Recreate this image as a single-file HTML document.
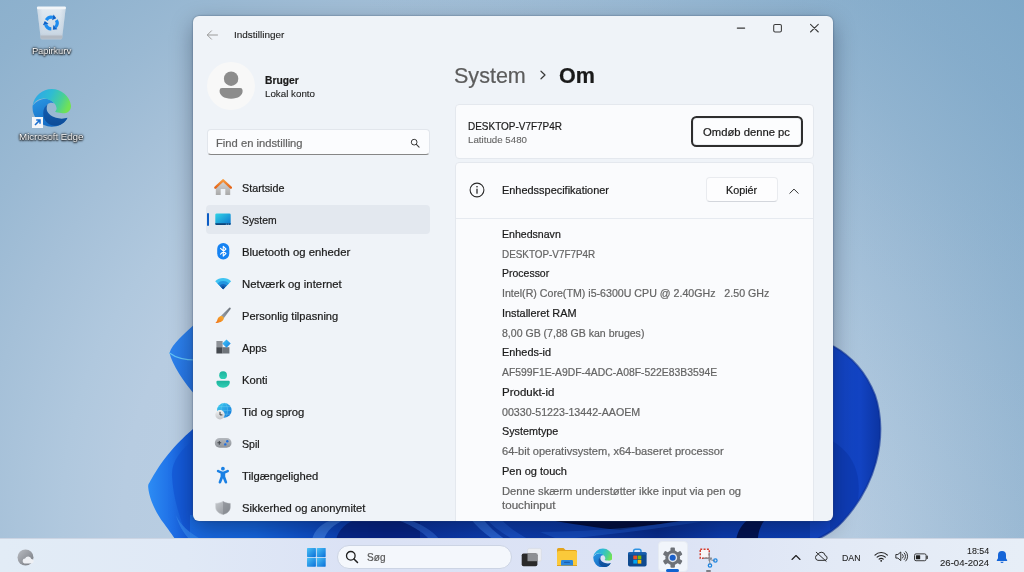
<!DOCTYPE html>
<html lang="da">
<head>
<meta charset="utf-8">
<title>Indstillinger</title>
<style>
*{box-sizing:border-box;margin:0;padding:0}
html,body{width:1024px;height:572px;overflow:hidden}
body{position:relative;font-family:"Liberation Sans","DejaVu Sans",sans-serif;color:#1b1b1b;
background:#9dbcd4}
#wall{position:absolute;left:0;top:0;width:1024px;height:572px}
.abs{position:absolute}
.t{position:absolute;-webkit-text-stroke:.22px currentColor;white-space:nowrap;line-height:0;height:0;transform-origin:0 50%}
/* desktop icons */
.dlabel{will-change:transform;color:#fff;-webkit-text-stroke:0;
text-shadow:0 0 2px #000,0 1px 2px #000,0 0 3px rgba(0,0,0,.8)}
/* window */
#win{will-change:transform;position:absolute;left:193px;top:16px;width:640px;height:505px;background:#eff3f8;
border-radius:6px;overflow:hidden;box-shadow:0 0 0 .5px rgba(70,95,125,.3),0 8px 22px rgba(0,10,30,.36),0 0 3px rgba(0,10,30,.2)}
#win{color:#1b1b1b}
.nav{font-size:11.2px}
.card{position:absolute;background:#fafbfd;border:1px solid #e4e8ee;border-radius:4px}
.lab{font-size:11.2px;color:#1b1b1b}
.val{font-size:11.2px;color:#6a6a6a}
/* taskbar */
#tb{will-change:transform;position:absolute;left:0;top:538px;width:1024px;height:34px;background:linear-gradient(90deg,#e2ecf6 0%,#e0e9f6 18%,#dbe2f5 34%,#dce3f5 66%,#e3eaf6 82%,#e7eef7 100%);box-shadow:inset 0 1px 0 #cdd5e3}
</style>
</head>
<body>
<svg id="wall" viewBox="0 0 1024 572">
<defs>
<radialGradient id="bg" cx="480" cy="520" r="760" gradientUnits="userSpaceOnUse">
<stop offset="0" stop-color="#c0d3e6"/><stop offset=".47" stop-color="#b7cce1"/><stop offset=".55" stop-color="#b0c8de"/><stop offset=".66" stop-color="#a5c0d8"/><stop offset=".76" stop-color="#9ab9d3"/><stop offset=".88" stop-color="#8fb2ce"/><stop offset="1" stop-color="#88aecb"/>
</radialGradient>
<linearGradient id="bg2" x1="1024" y1="0" x2="660" y2="330" gradientUnits="userSpaceOnUse"><stop offset="0" stop-color="#6a9cc2" stop-opacity=".32"/><stop offset="1" stop-color="#6a9cc2" stop-opacity="0"/></linearGradient>
<linearGradient id="pL1" x1="0" y1="0" x2="1" y2="1"><stop offset="0" stop-color="#2f86ee"/><stop offset="1" stop-color="#2470e0"/></linearGradient>
<linearGradient id="pL2" x1="0" y1="0" x2="1" y2="0"><stop offset="0" stop-color="#2c8cf4"/><stop offset=".5" stop-color="#1f6fe6"/><stop offset="1" stop-color="#0f4fd0"/></linearGradient>
<linearGradient id="pR" x1="810" y1="0" x2="882" y2="0" gradientUnits="userSpaceOnUse"><stop offset="0" stop-color="#1448c8"/><stop offset=".7" stop-color="#1243c2"/><stop offset="1" stop-color="#0b339f"/></linearGradient>
<linearGradient id="pB" x1="190" y1="0" x2="840" y2="0" gradientUnits="userSpaceOnUse"><stop offset="0" stop-color="#1a6ce4"/><stop offset=".1" stop-color="#1565de"/><stop offset=".2" stop-color="#0e4cc6"/><stop offset=".3" stop-color="#0a2f9c"/><stop offset=".45" stop-color="#0d3cae"/><stop offset=".6" stop-color="#0c3aa8"/><stop offset=".72" stop-color="#092c8c"/><stop offset=".82" stop-color="#0c3cb0"/><stop offset="1" stop-color="#0d3fb6"/></linearGradient>
</defs>
<rect width="1024" height="572" fill="url(#bg)"/>
<rect width="1024" height="572" fill="url(#bg2)"/>
<!-- bloom: bottom band -->
<path d="M196.0 427.0C195.5 427.3 195.6 426.8 193.0 429.0C190.4 431.2 184.8 436.3 180.6 440.5C176.4 444.7 171.8 449.8 168.0 454.4C164.2 459.0 160.8 464.0 157.8 468.4C154.9 472.8 151.9 477.9 150.3 481.0C148.7 484.1 148.0 483.9 148.2 487.3C148.4 490.7 149.7 496.4 151.5 501.3C153.3 506.2 156.3 511.9 159.1 516.5C161.8 521.1 165.5 525.4 168.0 529.0C170.5 532.6 173.0 536.0 174.3 538.0C175.6 540.0 175.7 540.5 176.0 541.0L196 541Z" fill="url(#pL2)"/>
<path d="M196 438 C181 449 171 462 172 476 C173 498 180 520 189 540 L196 540Z" fill="#1256d4" opacity=".7"/>
<path d="M196 323 C184 334 172 344 169.500 353 C172 364 184 383 196 396Z" fill="url(#pL1)"/>
<path d="M169.500 353 C176 358 186 360 196 360" fill="none" stroke="#63c4f6" stroke-width="1.200"/>
<rect x="190" y="515" width="626" height="26" fill="url(#pB)"/>
<path d="M176 515 C180 525 190 533 202 540 L190 540 C184 534 178 524 176 515Z" fill="#3b8ff0" opacity=".6"/>
<path d="M312 540 C314 530 322 523 334 519 L346 519 C334 524 326 531 324 540Z" fill="#3f7fe6" opacity=".75"/>
<path d="M336 540 C338 530 346 522 360 518 L420 518 L420 540Z" fill="#06207e" opacity=".8"/>
<path d="M392 518 C410 524 422 531 430 540 L440 540 C432 530 420 523 404 518Z" fill="#2b63d2" opacity=".7"/>
<path d="M470 518 L482 518 C488 526 496 533 506 540 L494 540 C484 533 476 526 470 518Z" fill="#2f6bdc" opacity=".8"/>
<path d="M486 518 L500 518 C508 527 518 534 530 540 L514 540 C502 533 492 526 486 518Z" fill="#1d55cc" opacity=".8"/>
<path d="M540 518 L700 518 C660 524 640 527 620 530 C600 528 570 524 540 518Z" fill="#020a34" opacity=".9"/>
<path d="M560 540 C600 535 650 530 700 522 L700 518 C650 527 600 531 540 532Z" fill="#1e57cc" opacity=".55"/>
<path d="M736 540 C738 530 742 524 750 518 L766 518 C760 526 758 533 758 540Z" fill="#020c40" opacity=".85"/>
<path d="M833 346 C851 356 866 372 875 395 C882 415 882 440 876 462 C869 488 855 508 843 521 C836 529 826 535 816 540 L810 540 L810 346Z" fill="url(#pR)"/>
<path d="M833 346 C851 356 866 372 875 395 C882 415 882 440 876 462 C869 488 855 508 843 521 C836 529 826 535 816 540" fill="none" stroke="#0a2d94" stroke-width="2" opacity=".6"/>
<path d="M830 440 C850 450 862 470 858 500 L843 521 L830 530Z" fill="#0c37ac" opacity=".6"/>
</svg>

<!-- shared icon defs -->
<svg width="0" height="0" style="position:absolute">
<defs>
<linearGradient id="eg1" x1="0" y1="0.200" x2="1" y2="0.500"><stop offset="0" stop-color="#2da4ea"/><stop offset=".45" stop-color="#2fbcd2"/><stop offset=".75" stop-color="#48cf98"/><stop offset="1" stop-color="#72e254"/></linearGradient>
<linearGradient id="eg2" x1="0" y1="0" x2=".6" y2="1"><stop offset="0" stop-color="#2a98e4"/><stop offset="1" stop-color="#1266c0"/></linearGradient>
<linearGradient id="eg3" x1="0" y1="0" x2="0" y2="1"><stop offset="0" stop-color="#155fb2"/><stop offset="1" stop-color="#0d4c98"/></linearGradient>
<g id="edgeicon">
<path d="M.65 18A19.900 19.900 0 0 0 20.100 39.800C27 39.800 33 36.500 36.400 30.600 30 36 22 38 17 34 12 30 10 22 16 16.600 18 14.800 20.500 14.600 22.800 15.700 18 9 8 9 .65 18z" fill="url(#eg2)"/>
<path d="M16.040 16.600C13 18.500 11.500 22 11.500 26 11.500 33 16 38.200 23 38.700 29 39 34 36 36.400 30.600 33 31.700 28 31.700 24.600 30.600 19 29 15 25 15.100 21.600 15.100 19.500 15.400 18 16.040 16.600z" fill="url(#eg3)"/>
<path d="M.65 18A19.900 19.900 0 0 1 40 18C40.200 21 39 23 37.300 24.300 35 26 32 26 30 25.600 27.500 25.300 25 25 23.700 24.300 25 23 25.500 21.500 25.100 20.200 24.600 18 24 17 22.800 15.700 21 13.500 19 12.500 17.400 12.060 15.500 11 13.500 10.700 11.960 10.700 9.500 10.800 7.500 11.300 5.630 12.500 3.500 13.800 1.800 15.500.65 18z" fill="url(#eg1)"/>
</g>
</defs>
</svg>
<!-- desktop icons -->
<svg class="abs" style="left:35px;top:4px" width="33" height="38" viewBox="0 0 33 38">
<defs><linearGradient id="rb" x1="0" y1="0" x2="0" y2="1"><stop offset="0" stop-color="#eef3f7"/><stop offset=".8" stop-color="#d3dde7"/><stop offset="1" stop-color="#c0c9d3"/></linearGradient>
<linearGradient id="rb2" x1="0" y1="0" x2="1" y2="0"><stop offset="0" stop-color="#b9cadb" stop-opacity=".55"/><stop offset=".2" stop-color="#b9cadb" stop-opacity="0"/><stop offset=".8" stop-color="#b9cadb" stop-opacity="0"/><stop offset="1" stop-color="#b9cadb" stop-opacity=".55"/></linearGradient></defs>
<path d="M2 3h28.800l-3.700 31.300a1.200 1.200 0 0 1-1.200 1.100H6.900a1.200 1.200 0 0 1-1.200-1.100z" fill="url(#rb)" opacity=".88"/>
<path d="M2 3h28.800l-3.700 31.300a1.200 1.200 0 0 1-1.200 1.100H6.900a1.200 1.200 0 0 1-1.200-1.100z" fill="url(#rb2)"/>
<rect x="1.900" y="2.500" width="29" height="2.800" rx="1.200" fill="#f2f6f9"/>
<path d="M5.300 31.600h22.200l-.4 3.200H5.700z" fill="#b3bac3"/>
<g transform="translate(16.300 19)"><g id="rarr"><path d="M-5.02 -2.90A5.800 5.800 0 0 1 1.50 -5.60" fill="none" stroke="#1d8df0" stroke-width="3.200"/><path d="M2.25 -8.40L4.98 -4.67L0.75 -2.80z" fill="#0d62c8"/></g><use href="#rarr" transform="rotate(120)"/><use href="#rarr" transform="rotate(240)"/></g>
</svg>
<div class="t dlabel" id="dl1" style="left:31.80px;top:50.50px;font-size:9.8px;transform:scaleX(0.9447);">Papirkurv</div>
<svg class="abs" style="left:31.800px;top:88.300px" width="39" height="39" viewBox="0 0 40 40"><use href="#edgeicon"/></svg>
<svg class="abs" style="left:32px;top:117px" width="11" height="11" viewBox="0 0 11 11"><rect width="11" height="11" fill="#f4f6f9"/><path d="M3 8l4.600-4.600M4.200 3h3.800v3.800" fill="none" stroke="#1a6fd0" stroke-width="1.500"/></svg>
<div class="t dlabel" id="dl2" style="left:19.20px;top:136.50px;font-size:9.8px;transform:scaleX(0.9840);">Microsoft Edge</div>

<div id="win">
<!-- title bar -->
<svg class="abs" style="left:13px;top:13px" width="13" height="12" viewBox="0 0 13 12"><path d="M11.5 6H1.5M5.5 1.8L1.3 6l4.2 4.2" fill="none" stroke="#9a9a9a" stroke-width="1" stroke-linecap="round" stroke-linejoin="round"/></svg>
<div class="t" id="ttl" style="left:40.60px;top:18.50px;font-size:9.8px;-webkit-text-stroke-width:.1px;transform:scaleX(1.0169);">Indstillinger</div>
<svg class="abs" style="left:537px;top:4px" width="100" height="16" viewBox="0 0 100 16"><g fill="none" stroke="#3a3a3a" stroke-width="1.050" stroke-linecap="round"><path d="M7.300 8.100h7.400"/><rect x="43.700" y="4.400" width="7.700" height="7.500" rx="1.400"/><path d="M80.500 4.400l7.800 7.600M88.300 4.400l-7.800 7.600"/></g></svg>
<!-- account -->
<div class="abs" style="left:14px;top:46px;width:48px;height:48px;border-radius:50%;background:#f8f8f8"></div>
<svg class="abs" style="left:14px;top:46px" width="48" height="48" viewBox="0 0 48 48"><circle cx="24.100" cy="16.700" r="7.200" fill="#8c8c8c"/><path d="M15 26h18.200a2.400 2.400 0 0 1 2.400 2.400v.9c0 3.800-4.200 7.500-11.500 7.500s-11.500-3.700-11.500-7.500v-.9A2.400 2.400 0 0 1 15 26z" fill="#8c8c8c"/></svg>
<div class="t" id="usr" style="left:72.00px;top:64.00px;font-size:11.2px;font-weight:bold;transform:scaleX(0.9186);">Bruger</div>
<div class="t" id="usr2" style="left:72.00px;top:77.50px;font-size:9.8px;-webkit-text-stroke-width:.1px;transform:scaleX(0.9978);">Lokal konto</div>
<!-- search -->
<div class="abs" style="left:14px;top:113px;width:223px;height:26px;background:#fbfcfe;border:1px solid #e2e6ec;border-bottom:1px solid #868686;border-radius:4px"></div>
<div class="t" id="find" style="left:23.00px;top:127.00px;font-size:11.2px;color:#646464;transform:scaleX(1.0017);">Find en indstilling</div>
<svg class="abs" style="left:216.900px;top:121.800px" width="10.400" height="10.400" viewBox="0 0 12 12"><circle cx="4.800" cy="4.800" r="3.300" fill="none" stroke="#3a3a3a" stroke-width="1.150"/><path d="M7.300 7.300L10.500 10.500" stroke="#3a3a3a" stroke-width="1.250" stroke-linecap="round"/></svg>
<!-- nav -->
<div class="abs" style="left:13px;top:189px;width:224px;height:29px;background:#e3e8ef;border-radius:4px"></div>
<div class="abs" style="left:13.700px;top:197px;width:2.500px;height:12.700px;background:#0b5cc5;border-radius:1.300px"></div>
<div id="navicons">
<svg class="abs" style="left:19.500px;top:162px" width="20" height="20" viewBox="0 0 20 20"><defs><linearGradient id="hw" x1="0" y1="0" x2="0" y2="1"><stop offset="0" stop-color="#d9d9d9"/><stop offset="1" stop-color="#a9a9a9"/></linearGradient><linearGradient id="hr" x1="0" y1="0" x2="0" y2="1"><stop offset="0" stop-color="#f79a3e"/><stop offset="1" stop-color="#e4641a"/></linearGradient></defs><path d="M2.800 7.500L10 2l7.200 5.500V17h-4.900v-6H7.700v6H2.800z" fill="url(#hw)"/><path d="M2.300 9.700L10.100 2.300l7.800 7.400" fill="none" stroke="url(#hr)" stroke-width="2.300" stroke-linecap="round" stroke-linejoin="round"/></svg>
<svg class="abs" style="left:19.500px;top:194px" width="20" height="20" viewBox="0 0 20 20"><defs><linearGradient id="sy" x1="0" y1="0" x2="1" y2="1"><stop offset="0" stop-color="#31d4e6"/><stop offset="1" stop-color="#0c74cf"/></linearGradient></defs><rect x="2.300" y="3.400" width="15.400" height="11.700" rx="1.400" fill="url(#sy)"/><path d="M2.300 13.200h15.400v.5a1.400 1.400 0 0 1-1.400 1.400H3.700a1.400 1.400 0 0 1-1.400-1.400z" fill="#0d4379"/><rect x="12.800" y="13.800" width="1.300" height=".7" fill="#7fc6ee"/><rect x="14.800" y="13.800" width="1.300" height=".7" fill="#7fc6ee"/></svg>
<svg class="abs" style="left:19.500px;top:226px" width="20" height="20" viewBox="0 0 20 20"><rect x="4.200" y="1" width="12.100" height="16.600" rx="6" fill="#1582f2"/><path d="M7.300 6.300l5.400 5.200-2.700 2.600V4.400l2.700 2.600-5.400 5.200" fill="none" stroke="#fff" stroke-width="1.100" stroke-linejoin="round" stroke-linecap="round" transform="translate(.25 0)"/></svg>
<svg class="abs" style="left:19.500px;top:258px" width="20" height="20" viewBox="0 0 20 20"><path d="M10.150 15.200L2.200 7.200a11.300 11.300 0 0 1 15.900 0z" fill="#3fc3f2"/><path d="M10.150 15.200L4.400 9.400a8.150 8.150 0 0 1 11.500 0z" fill="#2196e0"/><path d="M10.150 15.200L6.500 11.500a5.150 5.150 0 0 1 7.300 0z" fill="#1668bc"/><path d="M10.150 15.200L8.300 13.300a2.600 2.600 0 0 1 3.700 0z" fill="#0e4a96"/></svg>
<svg class="abs" style="left:19.500px;top:290px" width="20" height="20" viewBox="0 0 20 20"><defs><linearGradient id="bh" x1="1" y1="0" x2="0" y2="1"><stop offset="0" stop-color="#6d747c"/><stop offset="1" stop-color="#9aa0a8"/></linearGradient><linearGradient id="bb" x1="1" y1="0" x2="0" y2="1"><stop offset="0" stop-color="#f9b233"/><stop offset="1" stop-color="#ee6f16"/></linearGradient></defs><path d="M16.300 1.800c.8-.7 1.900.3 1.300 1.200L10.400 12.800 7.600 10.300z" fill="url(#bh)"/><path d="M7.700 10c1.700-.6 3.600 1.200 3 3-.8 2.400-4 4-8.400 4 .9-.6 1.600-1.500 2-3 .4-1.700 1.500-3.300 3.400-4z" fill="url(#bb)"/></svg>
<svg class="abs" style="left:19.500px;top:322px" width="20" height="20" viewBox="0 0 20 20"><defs><linearGradient id="ad" x1="0" y1="0" x2="1" y2="1"><stop offset="0" stop-color="#48c8f8"/><stop offset="1" stop-color="#0f7fe0"/></linearGradient></defs><rect x="3.400" y="3" width="6.200" height="6.200" fill="#8d9197"/><rect x="3.400" y="9.200" width="6.200" height="6.300" fill="#44484e"/><rect x="9.600" y="9.200" width="6.800" height="6.300" fill="#6f747a"/><rect x="3.400" y="3" width="13" height="12.500" rx="1" fill="none"/><path d="M13.500 1.400l4.200 4.200-4.200 4.200-4.200-4.200z" fill="url(#ad)"/></svg>
<svg class="abs" style="left:19.500px;top:354px" width="20" height="20" viewBox="0 0 20 20"><defs><linearGradient id="kg" x1="0" y1="0" x2="0" y2="1"><stop offset="0" stop-color="#1db39c"/><stop offset="1" stop-color="#2fcfb6"/></linearGradient></defs><circle cx="10.100" cy="5.200" r="3.900" fill="url(#kg)"/><path d="M4.600 10.800h11a1.200 1.200 0 0 1 1.200 1.200c0 3.300-2.600 5.700-6.700 5.700s-6.700-2.400-6.700-5.700a1.200 1.200 0 0 1 1.200-1.200z" fill="url(#kg)"/></svg>
<svg class="abs" style="left:19.500px;top:386px" width="20" height="20" viewBox="0 0 20 20"><defs><linearGradient id="tg" x1="0" y1="0" x2="1" y2="1"><stop offset="0" stop-color="#3fd0f0"/><stop offset="1" stop-color="#0f6fd8"/></linearGradient><linearGradient id="tc" x1="0" y1="0" x2="0" y2="1"><stop offset="0" stop-color="#f4f4f4"/><stop offset="1" stop-color="#c2c4c8"/></linearGradient></defs><circle cx="11.300" cy="8.400" r="7.300" fill="url(#tg)"/><g fill="none" stroke="#7fd6f6" stroke-width=".5" opacity=".7"><ellipse cx="11.300" cy="8.400" rx="3.200" ry="7.300"/><path d="M4 8.400h14.600M5.200 4.600h12.200M5.200 12.200h12.200"/></g><circle cx="7" cy="12.700" r="4.700" fill="url(#tc)"/><path d="M7 10.200v2.700h2" fill="none" stroke="#3a3a3a" stroke-width="1" stroke-linecap="round" stroke-linejoin="round"/></svg>
<svg class="abs" style="left:19.500px;top:418px" width="20" height="20" viewBox="0 0 20 20"><defs><linearGradient id="gp" x1="0" y1="0" x2="0" y2="1"><stop offset="0" stop-color="#b4b8be"/><stop offset="1" stop-color="#8e9298"/></linearGradient></defs><rect x="1.800" y="4" width="16.700" height="9.800" rx="4.900" fill="url(#gp)"/><path d="M6.300 6.900v3.800M4.400 8.800h3.800" stroke="#43474d" stroke-width="1.100"/><circle cx="14.300" cy="7.300" r="1.200" fill="#1f6fe0"/><circle cx="12.300" cy="10.400" r="1.200" fill="#1f6fe0"/></svg>
<svg class="abs" style="left:19.500px;top:450px" width="20" height="20" viewBox="0 0 20 20"><circle cx="9.900" cy="2.700" r="1.900" fill="#1a80e4"/><path d="M3.900 4.600c.3-.7 1-.9 1.700-.6l3 1.200c.8.300 1.800.3 2.600 0l3-1.200c.7-.3 1.400-.1 1.700.6.300.700-.1 1.400-.8 1.700l-2.900 1.200v3l1.900 5.200c.3.700-.1 1.500-.8 1.700-.7.300-1.400-.1-1.700-.8L9.900 12.200 8.200 16.600c-.3.700-1 1.100-1.700.8-.7-.2-1.100-1-.8-1.700l1.900-5.200v-3L4.700 6.300c-.7-.3-1.100-1-.8-1.700z" fill="#1a80e4"/></svg>
<svg class="abs" style="left:19.500px;top:482px" width="20" height="20" viewBox="0 0 20 20"><defs><linearGradient id="sh" x1="0" y1="0" x2="1" y2="1"><stop offset="0" stop-color="#c6c9ce"/><stop offset="1" stop-color="#8b8f95"/></linearGradient></defs><path d="M10 3.200c2.200 1.500 4.500 2.100 7.300 2.200v3.900c0 3.600-2.700 6-7.300 7.400-4.600-1.400-7.300-3.800-7.300-7.400V5.400c2.800-.1 5.100-.7 7.300-2.200z" fill="url(#sh)" stroke="#c9ccd1" stroke-width=".6"/><path d="M10 3.200c2.200 1.500 4.500 2.100 7.300 2.200v3.900c0 3.600-2.700 6-7.300 7.400z" fill="#7e8288" opacity=".55"/></svg>
</div>
<div class="t nav" id="n0" style="left:49.00px;top:172.00px;font-size:11.2px;transform:scaleX(0.9625);">Startside</div>
<div class="t nav" id="n1" style="left:49.00px;top:204.00px;font-size:11.2px;transform:scaleX(0.9273);">System</div>
<div class="t nav" id="n2" style="left:49.00px;top:236.00px;font-size:11.2px;transform:scaleX(1.0112);">Bluetooth og enheder</div>
<div class="t nav" id="n3" style="left:49.00px;top:268.00px;font-size:11.2px;transform:scaleX(1.0148);">Netværk og internet</div>
<div class="t nav" id="n4" style="left:49.00px;top:300.00px;font-size:11.2px;transform:scaleX(0.9914);">Personlig tilpasning</div>
<div class="t nav" id="n5" style="left:49.00px;top:332.00px;font-size:11.2px;transform:scaleX(0.9725);">Apps</div>
<div class="t nav" id="n6" style="left:49.00px;top:364.00px;font-size:11.2px;transform:scaleX(1.0000);">Konti</div>
<div class="t nav" id="n7" style="left:49.00px;top:396.00px;font-size:11.2px;transform:scaleX(1.0084);">Tid og sprog</div>
<div class="t nav" id="n8" style="left:49.00px;top:428.00px;font-size:11.2px;transform:scaleX(0.9487);">Spil</div>
<div class="t nav" id="n9" style="left:49.00px;top:460.00px;font-size:11.2px;transform:scaleX(1.0027);">Tilgængelighed</div>
<div class="t nav" id="n10" style="left:49.00px;top:492.00px;font-size:11.2px;transform:scaleX(1.0021);">Sikkerhed og anonymitet</div>
<!-- heading -->
<div class="t" id="h1a" style="left:260.50px;top:60.00px;font-size:21.5px;color:#5c5c5c;transform:scaleX(1.0016);">System</div>
<svg class="abs" style="left:346px;top:54px" width="8" height="10" viewBox="0 0 8 10"><path d="M2 1.200L6 5 2 8.800" fill="none" stroke="#3a3a3a" stroke-width="1.200" stroke-linecap="round" stroke-linejoin="round"/></svg>
<div class="t" id="h1b" style="left:366.30px;top:60.00px;font-size:21.5px;font-weight:bold;color:#1a1a1a;transform:scaleX(1.0016);">Om</div>
<!-- card 1 -->
<div class="card" style="left:261.500px;top:88px;width:359.500px;height:55px"></div>
<div class="t" id="c1a" style="left:275.00px;top:110.00px;font-size:11.2px;transform:scaleX(0.8910);">DESKTOP-V7F7P4R</div>
<div class="t" id="c1b" style="left:275.00px;top:123.50px;font-size:9.8px;color:#646464;-webkit-text-stroke-width:.1px;transform:scaleX(0.9934);">Latitude 5480</div>
<div class="abs" style="left:498px;top:100.300px;width:111.800px;height:30.600px;border:2px solid #2e2e2e;border-radius:5.500px;background:#fcfdfe;box-shadow:inset 0 0 0 1px #eceff3"></div>
<div class="t" id="c1c" style="left:510.00px;top:116.00px;font-size:11.2px;transform:scaleX(1.0063);">Omdøb denne pc</div>
<!-- card 2 -->
<div class="card" style="left:261.500px;top:146px;width:359.500px;height:380px;border-radius:4px 4px 0 0"></div>
<div class="abs" style="left:262.500px;top:201.500px;width:357.500px;height:1px;background:#e6eaf0"></div>
<svg class="abs" style="left:276px;top:166px" width="16" height="16" viewBox="0 0 16 16"><circle cx="8" cy="8" r="6.900" fill="none" stroke="#2a2a2a" stroke-width="1.100"/><path d="M8 7v4.200" stroke="#1b1b1b" stroke-width="1.200" stroke-linecap="round"/><circle cx="8" cy="4.800" r=".8" fill="#1b1b1b"/></svg>
<div class="t" id="c2a" style="left:309.00px;top:174.00px;font-size:11.2px;transform:scaleX(0.9774);">Enhedsspecifikationer</div>
<div class="abs" style="left:512.500px;top:161.200px;width:72.300px;height:25.200px;border:1px solid #e9ebef;border-bottom-color:#d3d6dc;border-radius:4px;background:#fdfdfe"></div>
<div class="t" id="c2b" style="left:533.00px;top:174.00px;font-size:11.2px;transform:scaleX(0.9646);">Kopiér</div>
<svg class="abs" style="left:595.300px;top:171px" width="12" height="8" viewBox="0 0 12 8"><path d="M1.800 6.300L6 2.100 10.200 6.300" fill="none" stroke="#333" stroke-width="1" stroke-linecap="round" stroke-linejoin="round"/></svg>
<div id="specs">
<div class="t lab" id="s0" style="left:309.00px;top:218.00px;font-size:11.2px;transform:scaleX(0.9451);">Enhedsnavn</div>
<div class="t val" id="s1" style="left:309.00px;top:238.00px;font-size:11.2px;color:#646464;transform:scaleX(0.8834);">DESKTOP-V7F7P4R</div>
<div class="t lab" id="s2" style="left:309.00px;top:257.00px;font-size:11.2px;transform:scaleX(0.9370);">Processor</div>
<div class="t val" id="s3" style="left:309.00px;top:277.00px;font-size:11.2px;color:#646464;transform:scaleX(0.9506);">Intel(R) Core(TM) i5-6300U CPU @ 2.40GHz&nbsp;&nbsp; 2.50 GHz</div>
<div class="t lab" id="s4" style="left:309.00px;top:297.00px;font-size:11.2px;transform:scaleX(0.9754);">Installeret RAM</div>
<div class="t val" id="s5" style="left:309.00px;top:317.00px;font-size:11.2px;color:#646464;transform:scaleX(0.9423);">8,00 GB (7,88 GB kan bruges)</div>
<div class="t lab" id="s6" style="left:309.00px;top:336.00px;font-size:11.2px;transform:scaleX(0.9724);">Enheds-id</div>
<div class="t val" id="s7" style="left:309.00px;top:356.00px;font-size:11.2px;color:#646464;transform:scaleX(0.9278);">AF599F1E-A9DF-4ADC-A08F-522E83B3594E</div>
<div class="t lab" id="s8" style="left:309.00px;top:376.00px;font-size:11.2px;transform:scaleX(1.0275);">Produkt-id</div>
<div class="t val" id="s9" style="left:309.00px;top:396.00px;font-size:11.2px;color:#646464;transform:scaleX(0.9536);">00330-51223-13442-AAOEM</div>
<div class="t lab" id="s10" style="left:309.00px;top:415.00px;font-size:11.2px;transform:scaleX(0.9632);">Systemtype</div>
<div class="t val" id="s11" style="left:309.00px;top:435.00px;font-size:11.2px;color:#646464;transform:scaleX(0.9899);">64-bit operativsystem, x64-baseret processor</div>
<div class="t lab" id="s12" style="left:309.00px;top:455.00px;font-size:11.2px;transform:scaleX(0.9858);">Pen og touch</div>
<div class="t val" id="s13" style="left:309.00px;top:475.00px;font-size:11.2px;color:#646464;transform:scaleX(1.0013);">Denne skærm understøtter ikke input via pen og</div>
<div class="t val" id="s14" style="left:309.00px;top:489.00px;font-size:11.2px;color:#646464;transform:scaleX(1.0360);">touchinput</div>
</div>
</div>

<div id="tb">
<!-- weather -->
<svg class="abs" style="left:16.200px;top:9.600px" width="20" height="20" viewBox="0 0 20 20"><defs><linearGradient id="wg" x1="0" y1="0" x2="1" y2="1"><stop offset="0" stop-color="#b9bcc2"/><stop offset="1" stop-color="#74787f"/></linearGradient></defs><circle cx="9.500" cy="9.500" r="8" fill="url(#wg)"/><path d="M8.500 15.500a2.600 2.600 0 0 1 .6-5.100 3.300 3.300 0 0 1 6.200.5 2.300 2.300 0 0 1 .2 4.600z" fill="#eef0f4"/></svg>
<!-- start -->
<svg class="abs" style="left:307.300px;top:10.400px" width="18.700" height="18.700" viewBox="0 0 19.500 19.500"><defs><linearGradient id="sg" x1="0" y1="0" x2="1" y2="1"><stop offset="0" stop-color="#4cc2f6"/><stop offset="1" stop-color="#0a6fd8"/></linearGradient></defs><g fill="url(#sg)"><rect x="0" y="0" width="9.300" height="9.300" rx=".6"/><rect x="10.200" y="0" width="9.300" height="9.300" rx=".6"/><rect x="0" y="10.200" width="9.300" height="9.300" rx=".6"/><rect x="10.200" y="10.200" width="9.300" height="9.300" rx=".6"/></g></svg>
<!-- search pill -->
<div class="abs" style="left:337.200px;top:6.500px;width:175.200px;height:24.100px;border-radius:12px;background:#f4f7fc;border:1px solid #ccd4e4"></div>
<svg class="abs" style="left:345px;top:12.200px" width="14" height="14" viewBox="0 0 14 14"><circle cx="5.800" cy="5.800" r="4.300" fill="none" stroke="#1f1f1f" stroke-width="1.300"/><path d="M9 9L12.500 12.500" stroke="#1f1f1f" stroke-width="1.500" stroke-linecap="round"/></svg>
<div class="t" id="sog" style="left:367.00px;top:19.00px;font-size:10.6px;color:#5a5a5a;transform:scaleX(0.9518);">Søg</div>
<!-- task view -->
<svg class="abs" style="left:520px;top:9px" width="23" height="21" viewBox="0 0 23 21"><rect x="7.500" y="1.400" width="13.900" height="12.800" rx="1.800" fill="#eceef2" stroke="#d3d7de" stroke-width=".5"/><rect x="1.700" y="6.500" width="15.700" height="12.800" rx="1.800" fill="#2a2a2a"/><path d="M7.500 6.500h9.900v7.700H7.500z" fill="#8d8f93"/></svg>
<!-- explorer -->
<svg class="abs" style="left:556px;top:8px" width="22" height="21" viewBox="0 0 22 21"><path d="M1 3.500a1.500 1.500 0 0 1 1.500-1.500h5l2 2h10a1.500 1.500 0 0 1 1.500 1.500v3H1z" fill="#e3a41c"/><rect x="1" y="5" width="20" height="14.500" rx="1.500" fill="#fbc93a"/><path d="M1 19.500h20" stroke="#e0a21c" stroke-width="1"/><path d="M5 19.500v-4.300a1.200 1.200 0 0 1 1.200-1.200h9.600a1.200 1.200 0 0 1 1.200 1.200v4.300z" fill="#2b86dc"/><rect x="8" y="15.700" width="6" height="1.200" rx=".6" fill="#1a5fae"/></svg>
<!-- edge -->
<svg class="abs" style="left:592.600px;top:9.600px" width="19.600" height="19.600" viewBox="0 0 40 40"><use href="#edgeicon"/></svg>
<!-- store -->
<svg class="abs" style="left:627px;top:9px" width="21" height="21" viewBox="0 0 21 21"><path d="M6.600 6V4.200a2 2 0 0 1 2-2h3.400a2 2 0 0 1 2 2V6" fill="none" stroke="#2f93e3" stroke-width="1.500"/><rect x="1" y="5.200" width="18.600" height="14.200" rx="1.900" fill="#0f4a8f"/><rect x="1" y="5.200" width="18.600" height="2.600" rx="1.300" fill="#165eae"/><rect x="6.300" y="8.600" width="3.700" height="3.700" fill="#f25022"/><rect x="10.600" y="8.600" width="3.700" height="3.700" fill="#7fba00"/><rect x="6.300" y="12.900" width="3.700" height="3.700" fill="#00a4ef"/><rect x="10.600" y="12.900" width="3.700" height="3.700" fill="#ffb900"/></svg>
<!-- settings (active) -->
<div class="abs" style="left:658px;top:3px;width:30px;height:31px;border-radius:4px;background:#f1f5fb;border:1px solid #e6ebf3"></div>
<svg class="abs" style="left:662.150px;top:8.600px" width="21.400" height="21.400" viewBox="-11 -11 22 22"><g fill="#6e7278"><circle r="7.600"/><g id="teeth"><rect x="-2.300" y="-10.400" width="4.600" height="5" rx="1"/><rect x="-2.300" y="5.400" width="4.600" height="5" rx="1"/></g><use href="#teeth" transform="rotate(60)"/><use href="#teeth" transform="rotate(120)"/></g><circle r="4.600" fill="#dfe4ec"/><circle r="3.100" fill="#1a5fc9"/></svg>
<div class="abs" style="left:666px;top:31px;width:13px;height:3px;border-radius:1.500px;background:#0f62d0"></div>
<!-- snipping -->
<svg class="abs" style="left:698.300px;top:8.900px" width="19.800" height="21.600" viewBox="0 0 22 24"><rect x="2.500" y="2.500" width="10" height="10" fill="#f7f7f7" stroke="#d33a2c" stroke-width="1.600" stroke-dasharray="2.200 1.500"/><path d="M12.500 6v9.500M6 12.500h9.500" stroke="#8a8d92" stroke-width="1.400"/><path d="M12.500 13.500l6.500 2" stroke="#8a8d92" stroke-width="1.200"/><path d="M12.500 13.500l1 6" stroke="#8a8d92" stroke-width="1.200"/><circle cx="19.300" cy="15" r="1.900" fill="none" stroke="#1f86e0" stroke-width="1.400"/><circle cx="13.300" cy="20.600" r="1.900" fill="none" stroke="#1f86e0" stroke-width="1.400"/></svg>
<div class="abs" style="left:706px;top:32px;width:5px;height:2px;border-radius:1px;background:#7d8087"></div>
<!-- tray -->
<svg class="abs" style="left:790.500px;top:15.700px" width="10" height="7" viewBox="0 0 10 7"><path d="M1 5.500L5 1.500 9 5.500" fill="none" stroke="#1f1f1f" stroke-width="1.100" stroke-linecap="round" stroke-linejoin="round"/></svg>
<svg class="abs" style="left:814.300px;top:12.300px" width="14.400" height="12.600" viewBox="0 0 16 14"><path d="M4.300 11.500h7.600a2.700 2.700 0 0 0 .5-5.350A4.200 4.200 0 0 0 4.300 5.200a3.200 3.200 0 0 0 0 6.300z" fill="none" stroke="#2a2a2a" stroke-width="1.100" stroke-linejoin="round"/><path d="M2.500 2.500l11 10" stroke="#2a2a2a" stroke-width="1.100" stroke-linecap="round"/></svg>
<div class="t" id="dan" style="left:842.40px;top:19.50px;font-size:9.8px;color:#1f1f1f;-webkit-text-stroke-width:.1px;transform:scaleX(0.8991);">DAN</div>
<svg class="abs" style="left:874.300px;top:12.600px" width="14.400" height="11.500" viewBox="0 0 15 12"><g fill="none" stroke="#1f1f1f" stroke-width="1.100" stroke-linecap="round"><path d="M1 4.300a9.200 9.200 0 0 1 13 0"/><path d="M3.200 6.500a6.100 6.100 0 0 1 8.600 0"/><path d="M5.300 8.600a3.100 3.100 0 0 1 4.400 0"/></g><circle cx="7.500" cy="10.300" r="1" fill="#1f1f1f"/></svg>
<svg class="abs" style="left:893.500px;top:12.400px" width="15.400" height="12.600" viewBox="0 0 16 14"><path d="M1.500 5h2.300L7 2.200v9.600L3.800 9H1.500z" fill="none" stroke="#1f1f1f" stroke-width="1" stroke-linejoin="round"/><g fill="none" stroke="#1f1f1f" stroke-width="1" stroke-linecap="round"><path d="M9 5a2.800 2.800 0 0 1 0 4"/><path d="M10.800 3.300a5.200 5.200 0 0 1 0 7.400"/><path d="M12.600 1.800a7.400 7.400 0 0 1 0 10.400"/></g></svg>
<svg class="abs" style="left:913.600px;top:15.100px" width="14.600" height="8.600" viewBox="0 0 17 10"><rect x=".6" y="1" width="13.500" height="8" rx="1.800" fill="none" stroke="#1f1f1f" stroke-width="1"/><rect x="2.200" y="2.600" width="5" height="4.800" rx=".6" fill="#1f1f1f"/><path d="M15.300 3.600v2.800" stroke="#1f1f1f" stroke-width="1.400" stroke-linecap="round"/></svg>
<div class="t" id="clk" style="left:967.00px;top:12.50px;font-size:9.8px;color:#1f1f1f;-webkit-text-stroke-width:.1px;transform:scaleX(0.9050);">18:54</div>
<div class="t" id="dat" style="left:940.10px;top:24.50px;font-size:9.8px;color:#1f1f1f;-webkit-text-stroke-width:.1px;transform:scaleX(0.9796);">26-04-2024</div>
<svg class="abs" style="left:996.200px;top:12.400px" width="12" height="14" viewBox="0 0 12 14"><path d="M6 1a4 4 0 0 0-4 4v3.200L.8 10.300a.5.500 0 0 0 .4.700h9.600a.5.500 0 0 0 .4-.7L10 8.200V5a4 4 0 0 0-4-4z" fill="#1565d8"/><path d="M4.300 11.800a1.800 1.800 0 0 0 3.400 0z" fill="#1565d8"/></svg>
</div>
</body>
</html>
